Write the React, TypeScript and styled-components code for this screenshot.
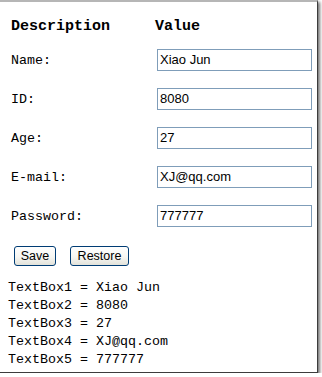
import React from 'react';
import styled, { createGlobalStyle } from 'styled-components';

const GlobalStyle = createGlobalStyle`
  html, body {
    margin: 0;
    padding: 0;
    background: #ffffff;
  }
`;

const Frame = styled.div`
  box-sizing: border-box;
  width: 318px;
  height: 373px;
  background: #ffffff;
  border-top: 2px solid #b6b6b6;
  border-right: 1px solid #3c3c3c;
  border-bottom: 1px solid #3c3c3c;
  box-shadow: 2px 2px 3px rgba(0, 0, 0, 0.55);
  font-family: "Liberation Mono", "DejaVu Sans Mono", monospace;
  color: #000;
`;

const Table = styled.div`
  display: grid;
  grid-template-columns: 144px 1fr;
  grid-auto-rows: 39px;
  grid-template-rows: 28px;
  padding: 10px 0 0 11px;
  align-items: center;
`;

const HeadCell = styled.div`
  font-size: 15px;
  font-weight: bold;
`;

const Label = styled.div`
  font-size: 13.33px;
  padding-top: 2px;
`;

const TextBox = styled.input`
  box-sizing: border-box;
  width: 155px;
  height: 22px;
  margin-left: 2px;
  padding: 0 2px;
  border: 1px solid #7f9db9;
  font-family: "Liberation Sans", Arial, sans-serif;
  font-size: 13px;
  color: #000;
  outline: none;
`;

const ButtonRow = styled.div`
  display: flex;
  gap: 14px;
  padding: 11px 0 0 14px;
`;

const Button = styled.button<{ $w: number }>`
  box-sizing: border-box;
  width: ${p => p.$w}px;
  height: 20px;
  padding: 0;
  border: 1px solid #003c74;
  border-radius: 3px;
  background: linear-gradient(to bottom, #ffffff 0%, #f6f6f2 55%, #e2e2da 100%);
  font-family: "Liberation Sans", Arial, sans-serif;
  font-size: 12.5px;
  color: #000;
`;

const Output = styled.div`
  padding: 13px 0 0 8px;
  font-size: 13.33px;
  line-height: 18px;
  white-space: pre;
`;

const fields = [
  { label: 'Name:', value: 'Xiao Jun' },
  { label: 'ID:', value: '8080' },
  { label: 'Age:', value: '27' },
  { label: 'E-mail:', value: 'XJ@qq.com' },
  { label: 'Password:', value: '777777' },
];

export default function App() {
  return (
    <>
      <GlobalStyle />
      <Frame>
        <Table>
          <HeadCell>Description</HeadCell>
          <HeadCell>Value</HeadCell>
          {fields.map(f => (
            <React.Fragment key={f.label}>
              <Label>{f.label}</Label>
              <TextBox defaultValue={f.value} />
            </React.Fragment>
          ))}
        </Table>
        <ButtonRow>
          <Button $w={42}>Save</Button>
          <Button $w={59}>Restore</Button>
        </ButtonRow>
        <Output>
          {fields.map((f, i) => (
            <div key={f.label}>{`TextBox${i + 1} = ${f.value}`}</div>
          ))}
        </Output>
      </Frame>
    </>
  );
}
